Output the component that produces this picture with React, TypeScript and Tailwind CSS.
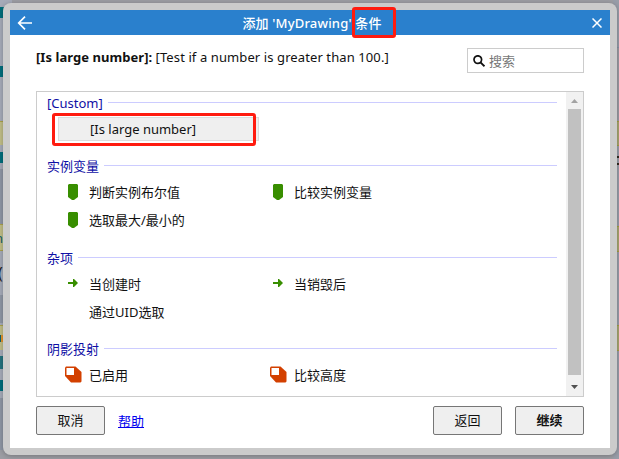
import type { ReactNode } from 'react';

type IconKind = 'tag' | 'arrow' | 'shadow' | 'none';
type Entry = { label: string; icon: IconKind; selected?: boolean };

function ItemIcon({ kind }: { kind: IconKind }) {
  if (kind === 'tag')
    return (
      <svg width="16" height="16" viewBox="0 0 16 16">
        <path d="M4 0h8l1 1v12L9 16H7L3 13V1z" fill="#388e00" />
      </svg>
    );
  if (kind === 'arrow')
    return (
      <svg width="16" height="16" viewBox="0 0 16 16">
        <path d="M3 6h5V3h1l4 4-4 4H8V8H3z" fill="#388e00" />
      </svg>
    );
  if (kind === 'shadow')
    return (
      <svg className="-mt-px" width="17" height="17" viewBox="0 0 17 17">
        <path d="M1 0.500h9.500L16.500 6V15.500l-1 1H6L0 10V1.500z" fill="#d34000" />
        <path d="M1.500 2h7.500v7h-7.500z" fill="#fff" />
      </svg>
    );
  return null;
}

function Item({ label, icon, selected }: Entry) {
  return (
    <div className="relative flex h-7 w-[205px] items-center">
      <div
        className={
          'flex h-6 w-[201px] items-center border ' +
          (selected ? 'border-[#dcdcdc] bg-[#efefef]' : 'border-transparent')
        }
      >
        <span className={'ml-[6px] flex shrink-0 ' + (selected ? 'w-[25px]' : 'w-[24px]')}>
          <ItemIcon kind={icon} />
        </span>
        <span>{label}</span>
      </div>
      {selected && (
        <div className="absolute left-[-6px] top-[-2px] h-[33px] w-[204px] rounded-[3px] border-[3px] border-[#ff1b0f]" />
      )}
    </div>
  );
}

function Group({ title, size, items }: { title: string; size: string; items: Entry[] }) {
  return (
    <section className={size}>
      <div className="flex h-[23px] items-center pl-[10px] pr-[9px] text-[#0f0fa5]">
        <span className="-mt-[2px] whitespace-nowrap">{title}</span>
        <span className="-mt-[2px] ml-[5px] h-px flex-1 bg-[#ccccff]" />
      </div>
      <div className="flex flex-wrap pl-[21px]">
        {items.map((item) => (
          <Item key={item.label} {...item} />
        ))}
      </div>
    </section>
  );
}

function Button({ children, className = '' }: { children: ReactNode; className?: string }) {
  return (
    <button
      className={
        'h-[29px] w-[69px] rounded-[2px] border border-[#767676] bg-[#efefef] text-center leading-[27px] ' + className
      }
    >
      {children}
    </button>
  );
}

function Strip({ className }: { className: string }) {
  return <div className={'w-full shrink-0 ' + className} />;
}

export default function App() {
  return (
    <div className="relative h-[459px] w-[619px] overflow-hidden bg-[#9c9da3] font-['Noto_Sans','Noto_Sans_CJK_SC',sans-serif] text-[13px] leading-[18px] text-[#111]">
      <div className="flex h-full justify-between">
        <div className="flex w-[12px] flex-col bg-[#a5aab8]">
          <Strip className="h-[7px]" />
          <Strip className="h-[11px] bg-[#006d7b]" />
          <Strip className="h-[48px]" />
          <Strip className="h-[11px] bg-[#006d7b]" />
          <Strip className="h-[44px]" />
          <Strip className="h-[24px] border-t border-[#aaa24a] bg-[#c0bd87]" />
          <Strip className="h-[7px]" />
          <Strip className="h-[11px] bg-[#006d7b]" />
          <Strip className="h-[6px]" />
          <Strip className="h-[55px] bg-[#8e96a4]" />
          <div className="flex h-[27px] w-full shrink-0 items-center border-y border-[#aaa24a] bg-[#c0bd87]">
            <span className="-ml-[5px] text-[#12616c]">n</span>
          </div>
          <div className="flex h-[44px] w-full shrink-0 items-center">
            <span className="-ml-[2px] text-[16px] text-[#222]">(</span>
          </div>
          <Strip className="h-[28px] bg-[#8e96a4]" />
          <Strip className="h-[2px]" />
          <div className="flex h-[25px] w-full shrink-0 items-center border-t border-[#aaa24a] bg-[#c0bd87]">
            <span className="-ml-[1px] h-[7px] w-[2px] bg-[#12616c]" />
            <span className="h-[7px] w-[2px] bg-[#e5942b]" />
          </div>
          <Strip className="h-[6px]" />
          <Strip className="h-[13px] bg-[#24727e]" />
          <Strip className="h-[11px]" />
          <Strip className="h-[11px] bg-[#006d7b]" />
          <Strip className="h-[7px]" />
          <Strip className="h-[52px] bg-[#8e96a4]" />
          <Strip className="h-[9px] bg-[#9c9da3]" />
        </div>
        <div className="flex w-[6px] flex-col bg-[#989da8]">
          <Strip className="h-[47px]" />
          <Strip className="h-[74px] border-t border-[#8890a5] bg-[#9b9aa2]" />
          <Strip className="h-[25px] border-y border-[#a3a043] bg-[#a7a572]" />
          <Strip className="h-[10px]" />
          <Strip className="h-[2px] bg-[#302a20]" />
          <Strip className="h-[5px]" />
          <Strip className="h-[2px] bg-[#302a20]" />
          <Strip className="h-[61px]" />
          <Strip className="h-[26px] border-y border-[#a3a043] bg-[#a7a572]" />
          <Strip className="h-[73px]" />
          <Strip className="h-[26px] border-y border-[#a3a043] bg-[#a7a572]" />
        </div>
      </div>

      <div className="absolute left-[3px] top-[3px] flex h-[452px] w-[614px] flex-col rounded-[8px] bg-[#cbcbcb] p-[7px] shadow-[0_1px_5px_rgba(0,0,0,0.25)]">
        <header className="flex h-[25px] shrink-0 items-center justify-between bg-[#2a80cd] text-white">
          <svg className="ml-[7px]" width="16" height="14" viewBox="0 0 16 14" fill="none" stroke="#fff" strokeWidth="1.700">
            <path d="M15 7H2M8 0.700L1.700 7L8 13.300" />
          </svg>
          <h1 className="relative mr-[1px] whitespace-nowrap text-[13px] font-medium tracking-[0.18px]">
            添加 'MyDrawing' 条件
            <span className="absolute -right-[14px] -top-[7px] h-[31px] w-[44px] rounded-[3px] border-[3px] border-[#ff1b0f]" />
          </h1>
          <svg className="mr-[8px]" width="10" height="10" viewBox="0 0 10 10" fill="none" stroke="#fff" strokeWidth="1.500">
            <path d="M0.500 0.500l9 9M9.500 0.500l-9 9" />
          </svg>
        </header>

        <main className="flex flex-1 flex-col bg-white px-[26px] pt-[13px]">
          <div className="flex h-[25px] shrink-0 justify-between">
            <p className="whitespace-nowrap">
              <b className="tracking-[0.05px]">[Is large number]:</b>{' '}
              <span className="tracking-[0.1px]">[Test if a number is greater than 100.]</span>
            </p>
            <div className="flex h-[25px] w-[117px] items-center border border-[#ccc] pl-[5px] text-[#777]">
              <svg className="mr-[4px]" width="12" height="12" viewBox="0 0 12 12" fill="none" stroke="#111">
                <ellipse cx="4.800" cy="4.600" rx="3.800" ry="3.800" strokeWidth="1.700" />
                <path d="M7.500 7.300l4 4" strokeWidth="1.900" />
              </svg>
              <span>搜索</span>
            </div>
          </div>

          <div className="mt-[18px] flex h-[306px] w-[548px] shrink-0 border border-[#ccc]">
            <div className="flex-1">
              <Group title="[Custom]" size="h-[63px]" items={[{ label: '[Is large number]', icon: 'none', selected: true }]} />
              <Group
                title="实例变量"
                size="h-[92px]"
                items={[
                  { label: '判断实例布尔值', icon: 'tag' },
                  { label: '比较实例变量', icon: 'tag' },
                  { label: '选取最大/最小的', icon: 'tag' },
                ]}
              />
              <Group
                title="杂项"
                size="h-[91px]"
                items={[
                  { label: '当创建时', icon: 'arrow' },
                  { label: '当销毁后', icon: 'arrow' },
                  { label: '通过UID选取', icon: 'none' },
                ]}
              />
              <Group
                title="阴影投射"
                size="h-[58px]"
                items={[
                  { label: '已启用', icon: 'shadow' },
                  { label: '比较高度', icon: 'shadow' },
                ]}
              />
            </div>
            <div className="flex w-[17px] flex-col items-center bg-[#f1f1f1]">
              <svg className="shrink-0" width="17" height="17" viewBox="0 0 17 17">
                <path d="M5 11l3.500-4L12 11z" fill="#a3a3a3" />
              </svg>
              <div className="h-[266px] w-[13px] bg-[#c1c1c1]" />
              <svg className="mt-[3px] shrink-0" width="17" height="17" viewBox="0 0 17 17">
                <path d="M5 7l3.500 4L12 7z" fill="#505050" />
              </svg>
            </div>
          </div>

          <footer className="mt-[9px] flex items-center">
            <Button>取消</Button>
            <a className="ml-[13px] text-[#0000ee] underline">帮助</a>
            <Button className="ml-auto">返回</Button>
            <Button className="ml-[13px] font-bold">继续</Button>
          </footer>
        </main>
      </div>
    </div>
  );
}
